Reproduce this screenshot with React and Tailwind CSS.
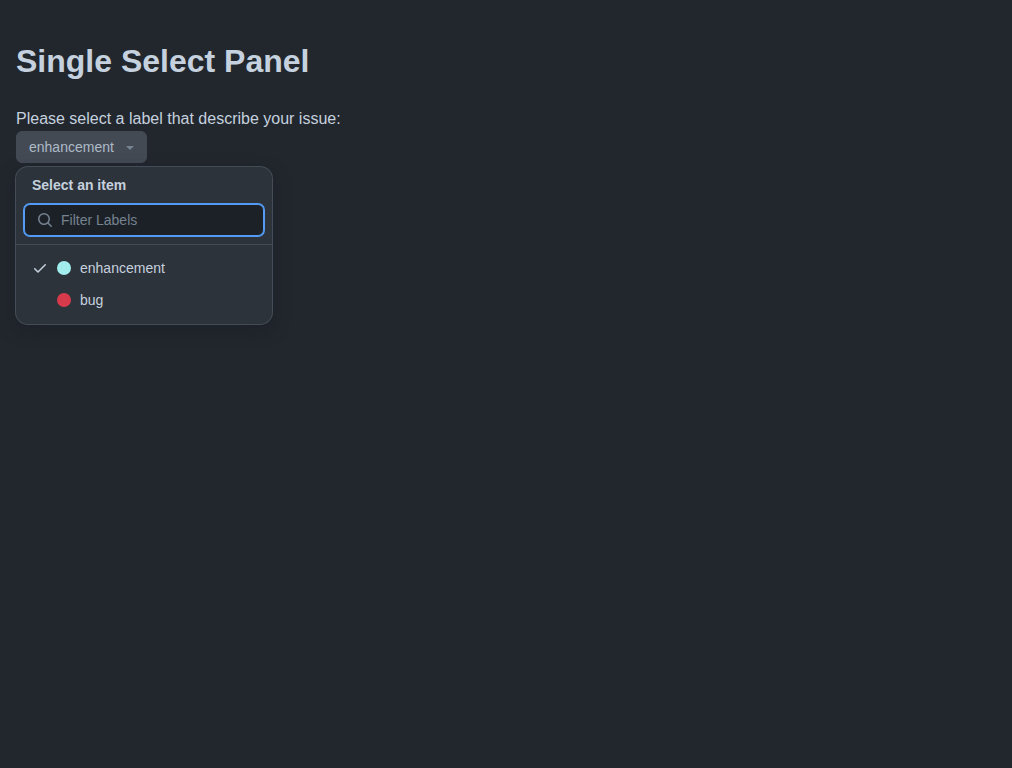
import { useState } from "react";

const labels = [
  { text: "enhancement", dot: "bg-[#a2eeef]" },
  { text: "bug", dot: "bg-[#d73a4a]" },
];

function Icon({ d, className }) {
  return (
    <svg viewBox="0 0 16 16" fill="currentColor" aria-hidden="true" className={`size-4 shrink-0 ${className || ""}`}>
      <path d={d} />
    </svg>
  );
}

const CHECK =
  "M13.78 4.22a.75.75 0 0 1 0 1.06l-7.25 7.25a.75.75 0 0 1-1.06 0L2.22 9.28a.751.751 0 0 1 .018-1.042.751.751 0 0 1 1.042-.018L6 10.94l6.72-6.72a.75.75 0 0 1 1.06 0Z";
const SEARCH =
  "M10.68 11.74a6 6 0 0 1-7.922-8.982 6 6 0 0 1 8.982 7.922l3.04 3.04a.749.749 0 0 1-.326 1.275.749.749 0 0 1-.734-.215ZM11.5 7a4.499 4.499 0 1 0-8.997 0A4.499 4.499 0 0 0 11.5 7Z";
const CARET =
  "m4.427 7.427 3.396 3.396a.25.25 0 0 0 .354 0l3.396-3.396A.25.25 0 0 0 11.396 7H4.604a.25.25 0 0 0-.177.427Z";

export default function App() {
  const [open, setOpen] = useState(true);
  const [selected, setSelected] = useState("enhancement");
  const [filter, setFilter] = useState("");
  const shown = labels.filter((l) => l.text.startsWith(filter.toLowerCase()));

  return (
    <main className="min-h-screen bg-[#22272e] p-4 font-['Liberation_Sans',Arial,sans-serif] text-base text-[#c5d1de]">
      <h1 className="my-[21px] text-[32px] leading-12 font-bold">Single Select Panel</h1>
      <div id="prompt" className="pt-px">Please select a label that describe your issue:</div>
      <div className="relative w-fit">
        <button
          type="button"
          aria-haspopup="listbox"
          aria-expanded={open}
          aria-describedby="prompt"
          onClick={() => setOpen(!open)}
          className="flex h-8 items-center gap-2 rounded-md border border-[#444a54] bg-[#444a54] pr-2 pl-3 text-sm text-[#adbac7]"
        >
          {selected}
          <Icon d={CARET} className="text-[#768390]" />
        </button>
        {open && (
          <section
            aria-labelledby="panel-title"
            className="absolute top-full left-0 mt-1 w-64 rounded-xl bg-[#2d333b] text-sm shadow-[0_0_0_1px_#444c56,0_6px_12px_-3px_#1c212866,0_6px_18px_0_#1c212866]"
          >
            <div className="flex flex-col gap-2 border-b border-[#444c56] p-2">
              <h2 id="panel-title" className="px-2 leading-[21px] font-bold">Select an item</h2>
              <label className="flex h-8 items-center gap-2 rounded-md border border-[#539bf5] bg-[#1c2128] px-3 shadow-[0_0_0_1px_#539bf5]">
                <Icon d={SEARCH} className="text-[#768390]" />
                <input
                  type="text"
                  aria-label="Filter Labels"
                  placeholder="Filter Labels"
                  value={filter}
                  onChange={(e) => setFilter(e.target.value)}
                  className="w-full min-w-0 bg-transparent outline-none placeholder:text-[#768390]"
                />
              </label>
            </div>
            <div role="listbox" aria-labelledby="panel-title" className="flex flex-col px-2 pt-[7px] pb-2">
              {shown.map((l) => (
                <button
                  key={l.text}
                  type="button"
                  role="option"
                  aria-selected={selected === l.text}
                  onClick={() => setSelected(l.text)}
                  className="flex h-8 items-center gap-2 rounded-md px-2 text-left"
                >
                  <Icon d={CHECK} className={selected === l.text ? "" : "invisible"} />
                  <span className="flex size-4 items-center justify-center">
                    <span className={`size-3.5 rounded-full ${l.dot}`} />
                  </span>
                  {l.text}
                </button>
              ))}
            </div>
          </section>
        )}
      </div>
    </main>
  );
}
